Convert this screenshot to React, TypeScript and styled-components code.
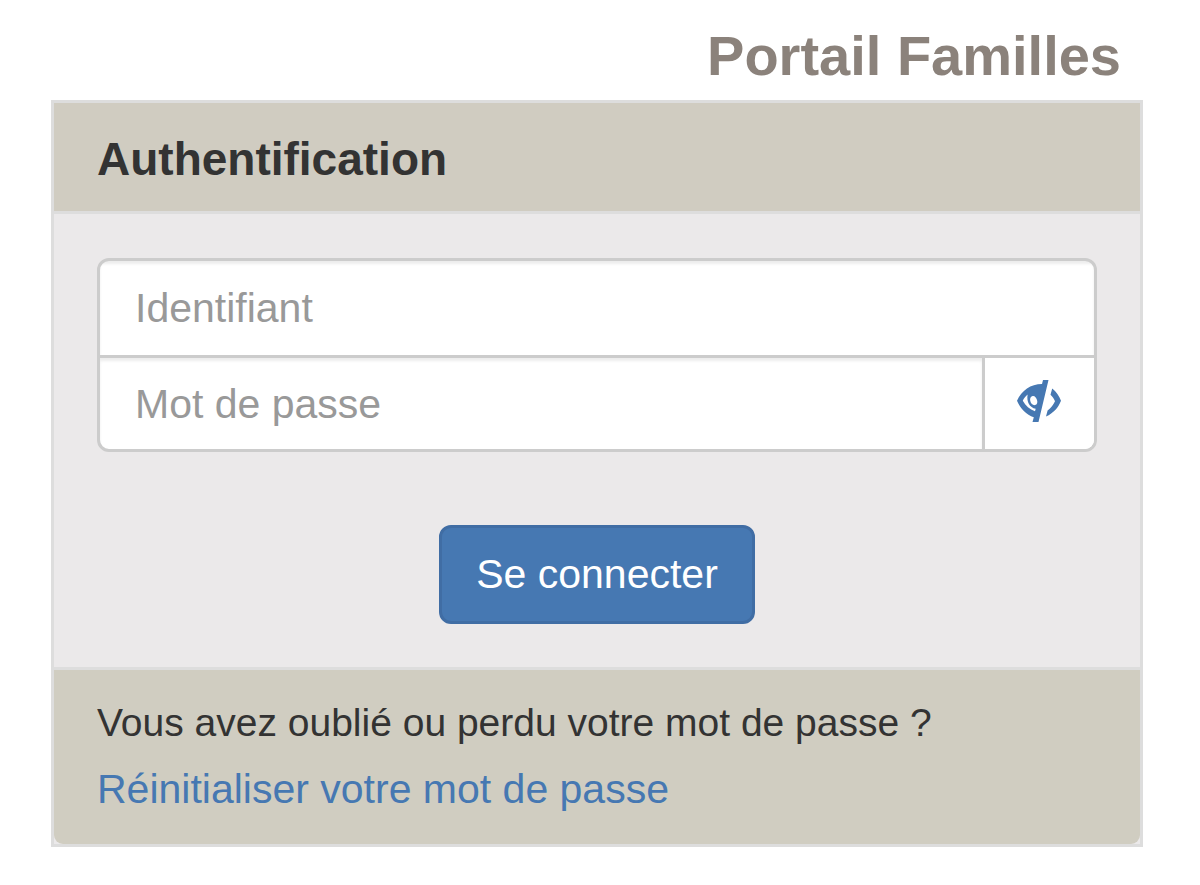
import React, { useState } from 'react';
import styled, { createGlobalStyle } from 'styled-components';

const GlobalStyle = createGlobalStyle`
  *, *::before, *::after {
    box-sizing: border-box;
  }
  body {
    margin: 0;
    background: #fff;
    color: #333;
    font-family: "Helvetica Neue", Helvetica, "Liberation Sans", Arial, sans-serif;
    font-size: 41px;
    line-height: 66px;
  }
`;

const Page = styled.main`
  padding: 24px 57px 38px 51px;
`;

const SiteTitle = styled.h1`
  margin: 0;
  padding: 0 22px 12px;
  color: #8b827b;
  font-size: 56px;
  line-height: 64px;
  text-align: right;
`;

const Panel = styled.section`
  border: 3px solid #dddddd;
  background: #ebe9ea;
`;

const PanelHeader = styled.header`
  padding: 26px 43px 22px;
  border-bottom: 3px solid #dddddd;
  background: #d0ccc1;
`;

const PanelTitle = styled.h2`
  margin: 0;
  font-size: 46px;
  line-height: 60px;
`;

const LoginForm = styled.form`
  padding: 44px 43px 43px;
  text-align: center;
`;

const FieldGroup = styled.div`
  overflow: hidden;
  border: 3px solid #cccccc;
  border-radius: 12px;
  background: #fff;
`;

const FieldRow = styled.div`
  display: flex;
  height: 94px;

  & + & {
    border-top: 3px solid #cccccc;
  }
`;

const Field = styled.input`
  flex: 1;
  min-width: 0;
  padding: 0 35px;
  border: 0;
  outline: 0;
  background: transparent;
  box-shadow: inset 0 3px 3px rgba(0, 0, 0, 0.075);
  color: #555;
  font: inherit;

  &::placeholder {
    color: #999;
    opacity: 1;
  }
`;

const RevealButton = styled.button`
  display: flex;
  align-items: center;
  justify-content: center;
  width: 112px;
  padding: 0 2px 6px 0;
  border: 0;
  border-left: 3px solid #cccccc;
  background: #fff;
  color: #4678b2;
  cursor: pointer;
`;

const SubmitButton = styled.button`
  margin-top: 73px;
  padding: 0 34px;
  border: 3px solid #406da4;
  border-radius: 12px;
  background: #4678b2;
  color: #fff;
  font: inherit;
  line-height: 93px;
  vertical-align: top;
  cursor: pointer;
`;

const PanelFooter = styled.footer`
  padding: 20px 43px 22px;
  border-top: 3px solid #dddddd;
  border-radius: 0 0 9px 9px;
  background: #d0cdc1;
`;

const Question = styled.p`
  margin: 0;
  font-size: 39px;
`;

const ResetLink = styled.a`
  color: #4678b2;
  text-decoration: none;
`;

const EyeCloseIcon = () => (
  <svg width="44" height="42" viewBox="0 0 44 42" fill="currentColor" aria-hidden="true">
    <path
      fillRule="evenodd"
      d="M26 0H31.5L21.5 42H15.5L16.8 37.2C9.5 35 3.2 28.5 0 20.8C4.8 10.5 13.5 4 25 4ZM10.6 14.5C8.4 16.4 6.8 18.5 5.8 20.8C8.6 26 12.6 29.4 18 31.2L18.7 28.8C12.6 27.6 9.4 21.8 10.6 14.5ZM15.6 16C13.2 16.6 12.8 19 13.3 21C13.9 23.6 16 25.6 18.1 25.1C20.2 24.5 20.8 22.3 20 19.9C19.2 17.4 17.6 15.5 15.6 16Z"
    />
    <path d="M35.2 8.6C39.2 11.8 42.2 16 44 20.8C41.2 27.8 36.6 33 29 36.6L30.6 30.4C34 28 36.4 24.8 38 21.2C37 18.8 35.5 16.6 33.5 14.8Z" />
  </svg>
);

export default function App() {
  const [visible, setVisible] = useState(false);

  return (
    <>
      <GlobalStyle />
      <Page>
        <SiteTitle>Portail Familles</SiteTitle>
        <Panel>
          <PanelHeader>
            <PanelTitle>Authentification</PanelTitle>
          </PanelHeader>
          <LoginForm onSubmit={(event) => event.preventDefault()}>
            <FieldGroup>
              <FieldRow>
                <Field type="text" name="username" placeholder="Identifiant" aria-label="Identifiant" autoComplete="username" />
              </FieldRow>
              <FieldRow>
                <Field
                  type={visible ? 'text' : 'password'}
                  name="password"
                  placeholder="Mot de passe"
                  aria-label="Mot de passe"
                  autoComplete="current-password"
                />
                <RevealButton
                  type="button"
                  aria-label="Afficher le mot de passe"
                  aria-pressed={visible}
                  onClick={() => setVisible(!visible)}
                >
                  <EyeCloseIcon />
                </RevealButton>
              </FieldRow>
            </FieldGroup>
            <SubmitButton type="submit">Se connecter</SubmitButton>
          </LoginForm>
          <PanelFooter>
            <Question>Vous avez oublié ou perdu votre mot de passe ?</Question>
            <ResetLink href="#reset">Réinitialiser votre mot de passe</ResetLink>
          </PanelFooter>
        </Panel>
      </Page>
    </>
  );
}
